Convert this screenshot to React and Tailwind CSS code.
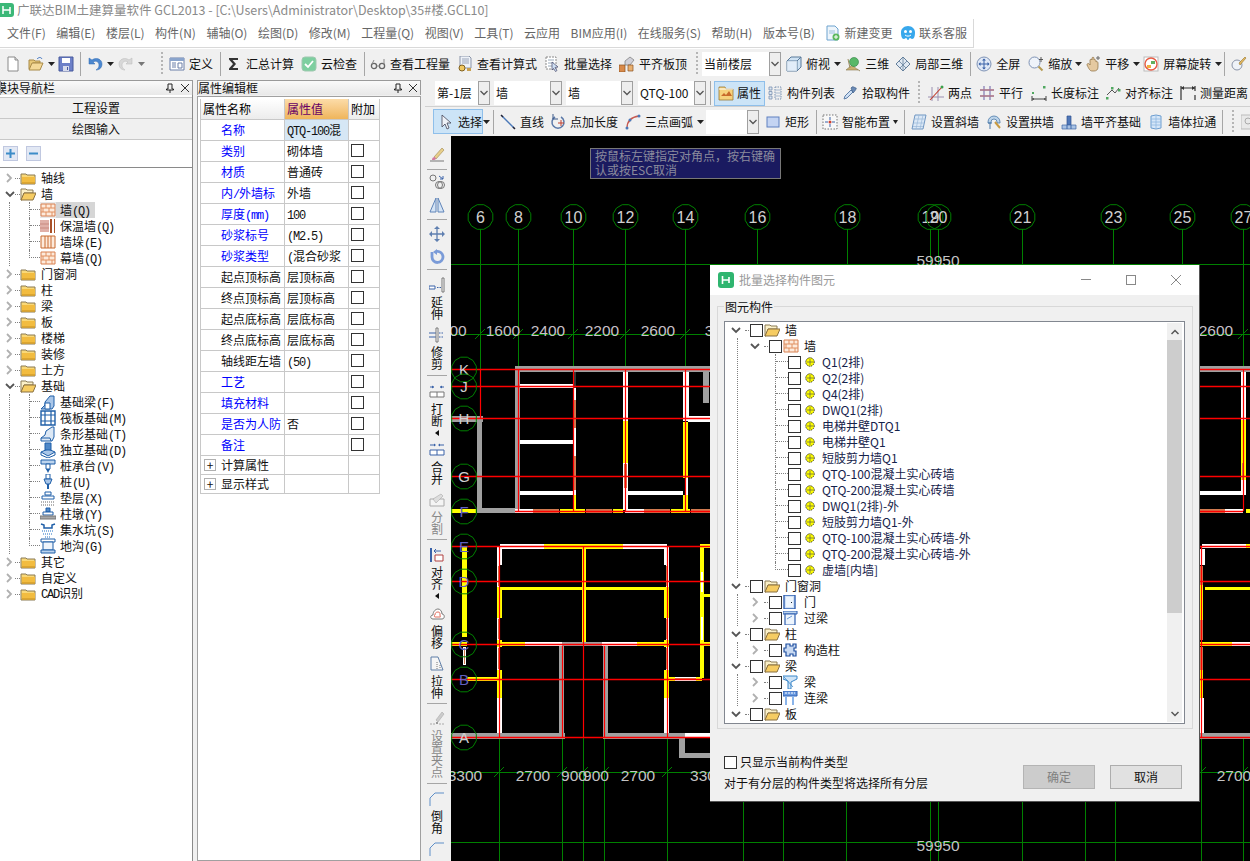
import React from "react";

const Ic = ({ w = 16, h = 16, children }) => (
  <svg width={w} height={h} viewBox={`0 0 ${w} ${h}`} className="shrink-0 block">{children}</svg>
);
const Arrow = ({ ml }) => (
  <span className={ml}><Ic w={7} h={4}><path d="M0 0h7L3.5 4z" fill="#222" /></Ic></span>
);
const GrayArrow = ({ ml }) => (
  <span className={ml}><Ic w={7} h={4}><path d="M0 0h7L3.5 4z" fill="#777" /></Ic></span>
);
const Sep = ({ ml }) => <span className={`w-px h-[24px] bg-[#a6a6a6] shrink-0 ${ml}`} />;
const Grip = ({ ml }) => (
  <span className={`shrink-0 ${ml}`}>
    <svg width="3" height="26" className="block"><path d="M1 1v24" stroke="#b5b5b5" strokeWidth="2" strokeDasharray="2 2" /></svg>
  </span>
);
const T = ({ ml, icon, label }) => (
  <span className={`flex items-center gap-[4px] shrink-0 ${ml}`}>
    {icon}
    {label ? <span className="text-[12px] leading-[16px] whitespace-nowrap text-[#111]">{label}</span> : null}
  </span>
);
const Chev = () => (
  <svg width="8" height="6" viewBox="0 0 8 6" className="block"><path d="M0.5 1 4 4.5 7.5 1" fill="none" stroke="#555" strokeWidth="1.3" /></svg>
);
const Combo = ({ w, text }) => (
  <span className={`flex h-[24px] bg-white shrink-0 ${w}`}>
    <span className="flex-1 min-w-0 overflow-hidden pl-[2px] text-[12px] leading-[24px] whitespace-nowrap text-[#111]">{text}</span>
    <span className="w-[12px] shrink-0 border border-[#a0a0a0] bg-[#eeeeee] flex items-center justify-center"><Chev /></span>
  </span>
);

/* toolbar icons */
const Doc = () => <Ic><path d="M3 1h7l3 3v11H3z" fill="#fff" stroke="#8a8a8a" /><path d="M10 1v3h3" fill="#ddd" stroke="#8a8a8a" /></Ic>;
const OpenF = () => <Ic><path d="M1 4h5l1 1h5v2H5L3 13H1z" fill="#e8c878" stroke="#a88a48" /><path d="M4 7h11l-3 7H1z" fill="#f4d998" stroke="#a88a48" /><path d="M9 3c2-2 4-2 5 0" fill="none" stroke="#3a70c0" /></Ic>;
const Save = () => <Ic><path d="M1 1h14v14H1z" fill="#6d80c8" stroke="#46589c" /><path d="M4 2h8v5H4z" fill="#fff" /><path d="M5 10h6v5H5z" fill="#d8dcec" /><path d="M9 11h1v3H9z" fill="#46589c" /></Ic>;
const Undo = () => <Ic><path d="M2 2v6h6L6 6c3-2 6 0 6 3 0 2-1 4-3 5 4 0 6-3 6-6 0-5-6-7-10-4z" fill="#4c88d0" stroke="#2f68b0" strokeWidth=".5" /></Ic>;
const Redo = () => <Ic><path d="M14 2v6H8l2-2c-3-2-6 0-6 3 0 2 1 4 3 5-4 0-6-3-6-6 0-5 6-7 10-4z" fill="#d8d8d8" stroke="#b8b8b8" strokeWidth=".5" /></Ic>;
const Define = () => <Ic><path d="M1 2h14v12H1z" fill="#fff" stroke="#6a7fa8" /><path d="M1 2h14v3H1z" fill="#8aa4cc" /><path d="M3 7h4M3 9h4M3 11h4M9 7h4v5H9z" fill="none" stroke="#6a7fa8" /></Ic>;
const Sigma = () => <Ic><path d="M3 2h9v2H6.5L10 8l-3.5 4H12v2H3v-1.5L7 8 3 3.5z" fill="#333" /></Ic>;
const CheckI = () => <Ic><rect x="1" y="1" width="14" height="14" rx="3" fill="#7ecfa0" stroke="#a0c8b0" /><path d="M4 8l3 3 5-6" fill="none" stroke="#fff" strokeWidth="1.8" /></Ic>;
const Glass = () => <Ic><circle cx="4" cy="10" r="2.6" fill="none" stroke="#666" strokeWidth="1.3" /><circle cx="12" cy="10" r="2.6" fill="none" stroke="#666" strokeWidth="1.3" /><path d="M6.6 10h2.8M2 8l2-4M14 8V3" stroke="#888" fill="none" /></Ic>;
const DocFind = () => <Ic><path d="M3 0h9l2 2v10H3z" fill="#eef2f8" stroke="#8a94a8" /><path d="M5 3h7M5 5h7M5 7h7" stroke="#9aa4b8" /><circle cx="5" cy="12" r="3" fill="#f0c860" stroke="#806020" /><path d="M10 12h4v3h-4z" fill="#c8a050" /></Ic>;
const Batch = () => <Ic><path d="M2 1h10v12H2z" fill="#fff" stroke="#8a8a8a" strokeDasharray="2 1" /><path d="M4 4h6M4 7h6M4 10h4" stroke="#9ab" /><path d="M8 6l6 5-3 .5 2 3-1.5 1-2-3L8 14z" fill="#cfe0f4" stroke="#446" strokeWidth=".7" /></Ic>;
const Plate = () => <Ic><path d="M0 9h6v7H0z" fill="#d98a4a" stroke="#8a5020" strokeWidth=".7" /><path d="M6 5l5-4 4 3-4 5H6z" fill="#d0d0d8" stroke="#777" strokeWidth=".7" /><path d="M9 9h5v6H9z" fill="#e8b070" stroke="#8a5020" strokeWidth=".7" /></Ic>;
const Box3 = () => <Ic><path d="M1 5l4-4h10v10l-4 4H1z" fill="#cfe2f3" stroke="#5a7a9a" /><path d="M1 5h10v10M11 5l4-4" fill="none" stroke="#5a7a9a" /><path d="M1 5h10v10H1z" fill="#e9f2fb" fillOpacity=".7" /></Ic>;
const ThreeD = () => <Ic><path d="M1 14l6-5 6 5z" fill="#c9b070" stroke="#8a7a50" strokeWidth=".6" /><circle cx="9" cy="6" r="4.5" fill="#58b868" stroke="#2d8040" strokeWidth=".6" /><path d="M3 3l2 9M12 13l3 2" stroke="#9a8a60" /></Ic>;
const Local3 = () => <Ic><path d="M1 8l7-7 7 7-7 7z" fill="#dfe8f2" stroke="#65809c" /><path d="M4 5l7 7M8 1l-0 14M12 5l-7 7" stroke="#65809c" strokeWidth=".8" /></Ic>;
const Full = () => <Ic><circle cx="8" cy="8" r="7" fill="#dfe8f6" stroke="#7f93b5" /><path d="M8 3v10M3 8h10" stroke="#3b62a8" /><path d="M8 2.5l-2 2h4zM8 13.5l-2-2h4zM2.5 8l2-2v4zM13.5 8l-2-2v4z" fill="#3b62a8" /></Ic>;
const ZoomI = () => <Ic><circle cx="6.5" cy="6.5" r="5.5" fill="#eef3fa" stroke="#7f93b5" /><path d="M10.5 10.5l4 4" stroke="#b59a50" strokeWidth="2" /><path d="M13 1v5M11 3.5h4" stroke="#555" /></Ic>;
const Pan = () => <Ic><path d="M2 9c0-2 2-2 3 0V4c0-1 2-1 2 0V2c0-1 2-1 2 0v2c1-1 2 0 2 1v1c1-1 2 0 2 1v4c0 3-2 4-4 4H7C5 15 4 13 2 9z" fill="#e5c9a0" stroke="#8a6d40" strokeWidth=".7" /><path d="M13 0v4M11 2h4" stroke="#666" /></Ic>;
const Rotate = () => <Ic><rect x="1" y="1" width="14" height="14" fill="#fff" stroke="#bbb" /><circle cx="8" cy="8" r="6" fill="none" stroke="#e65c45" strokeWidth="1.4" /><path d="M4 9h4v3H4z" fill="#f0b040" /><path d="M8 5h4v3H8z" fill="#60b060" /></Ic>;
const Wand = () => <Ic><circle cx="6" cy="9" r="5" fill="#eef2f8" stroke="#8a94a8" /><path d="M8 7l6-6 1 1-6 7z" fill="#e4b860" stroke="#96752a" strokeWidth=".6" /></Ic>;
const PropsI = () => <Ic><path d="M1 2h6l1 2h7v11H1z" fill="#f6d27c" stroke="#9a7a38" strokeWidth=".8" /><path d="M3 11l3-3 2 2 3-4 3 5H3z" fill="#c86a2a" /><path d="M1 4h14" stroke="#fff" /></Ic>;
const ListI = () => <Ic><path d="M2 2h3v3H2zM2 6.500h3v3H2zM2 11h3v3H2z" fill="#dde8f4" stroke="#7890b0" strokeWidth=".8" /><path d="M8 2h6v12H8z" fill="none" stroke="#7890b0" strokeDasharray="1.500 1" /><path d="M8 5h6M8 8h6M8 11h6" stroke="#a5b8cf" /></Ic>;
const Dropper = () => <Ic><path d="M2 14l1-3 6-6 2 2-6 6z" fill="#cfe0f4" stroke="#5f7fa8" /><path d="M9 3l1-1c1-1 3 1 4 1s-1 3-2 4l-1 1z" fill="#6a8ab5" stroke="#3f5f88" strokeWidth=".7" /></Ic>;
const TwoP = () => <Ic><path d="M0 12h16M4 2v14M10 2v14" stroke="#9a8fb0" /><path d="M2 15L14 2" stroke="#c03a2a" strokeWidth="1.100" /><circle cx="14" cy="2" r="1.500" fill="#3aa04a" /></Ic>;
const Para = () => <Ic><path d="M1 5h14M1 11h14M5 1v14M11 1v14" stroke="#8a82b8" strokeWidth="1.300" /><path d="M1 5h14M1 11h14" stroke="#d07060" strokeWidth=".8" /></Ic>;
const LenD = () => <Ic><path d="M1 14h14M1 11v5M15 11v5" stroke="#444" /><path d="M1 14l2-1v2zM15 14l-2-1v2z" fill="#444" /><rect x="1" y="7" width="2" height="2" fill="#50a860" /><rect x="12" y="1" width="2.500" height="2.500" fill="#50a860" /></Ic>;
const AlignD = () => <Ic><path d="M2 10l5-5 3 3 4-5" fill="none" stroke="#555" /><rect x="1" y="12" width="2.500" height="2.500" fill="#50a860" /><rect x="6" y="2" width="2.500" height="2.500" fill="#50a860" /><rect x="13" y="4" width="2.500" height="2.500" fill="#50a860" /></Ic>;
const Meas = () => <Ic><path d="M1 3h14M1 1v14M15 1v5M15 10v5" stroke="#333" strokeWidth="1.200" /><path d="M1 3l3-2v4zM15 3l-3-2v4z" fill="#333" /></Ic>;
const Cursor = () => <Ic><path d="M5 1v12l3-3 2 5 2-1-2-5h4z" fill="#eef2f8" stroke="#445" strokeWidth=".8" /></Ic>;
const Line = () => <Ic><path d="M2 2l12 12" stroke="#4a78b8" strokeWidth="1.500" /><path d="M1 1l2 2M13 13l2 2" stroke="#223" strokeWidth="1.500" /></Ic>;
const PtLen = () => <Ic><path d="M5 3a6 6 0 1 0 6 0" fill="none" stroke="#5a78a8" strokeWidth="1.500" /><path d="M3 0v5h5" fill="none" stroke="#3a5888" /><path d="M11 6v6M8 9h6" stroke="#c04030" /></Ic>;
const Arc = () => <Ic><path d="M2 14C2 7 7 3 14 2" fill="none" stroke="#c85a50" strokeWidth="1.300" /><circle cx="2" cy="14" r="1.500" fill="#4a78b8" /><circle cx="14" cy="2" r="1.500" fill="#4a78b8" /><circle cx="5" cy="6" r="1.500" fill="#4a78b8" /></Ic>;
const RectI = () => <Ic><rect x="2" y="3" width="12" height="10" fill="#c4d4f2" stroke="#5f80c0" /></Ic>;
const Smart = () => <Ic><path d="M1 1h14v14H1z" fill="#f8f8f8" stroke="#777" strokeDasharray="1.500 1.500" /><path d="M8 3v3M8 10v3M3 8h3M10 8h3" stroke="#3a62a8" /><circle cx="8" cy="8" r="1.500" fill="#d04030" /></Ic>;
const Slant = () => <Ic><path d="M4 1h11l-3 14H1z" fill="#dbe8f6" stroke="#6f96c2" /><path d="M3.500 5h10M2.800 9h10M2 12.500h10M8 1l-3 14M12 1l-3 14" stroke="#9ab8d8" strokeWidth=".7" /></Ic>;
const ArchI = () => <Ic><path d="M2 8a6 6 0 0 1 12 0v1h-3V8a3 3 0 0 0-6 0v1H2z" fill="#bcd4ea" stroke="#4a78a8" strokeWidth=".8" /><path d="M4 9v6M2 9h4" stroke="#4a78a8" /><path d="M9 8l5 6" stroke="#c89a40" strokeWidth="2" /></Ic>;
const WallB = () => <Ic><path d="M6 2h4v9H6z" fill="#5078b8" stroke="#2f508f" strokeWidth=".7" /><path d="M1 11h14v4H1z" fill="#a8c2e4" stroke="#3f68a8" strokeWidth=".7" /><path d="M6 11v4M10 11v4" stroke="#3f68a8" /></Ic>;
const WallT = () => <Ic><path d="M3 2l5-1 5 1v12l-5 1-5-1z" fill="#d5e6f8" stroke="#6d9ed0" /><path d="M8 1v14M3 5h10M3 8h10M3 11h10" stroke="#8fb8e0" strokeWidth=".8" /></Ic>;
const Mag = () => <Ic><rect x="0" y="1" width="15" height="14" fill="#e8e8e8" stroke="#bbb" /><circle cx="7" cy="7" r="3" fill="none" stroke="#aaa" /></Ic>;
const NewChg = () => <Ic><path d="M2 1h8l3 3v11H2z" fill="#eef5fb" stroke="#6da3cf" /><path d="M4 6h6M4 8h6" stroke="#9cc0dd" /><circle cx="11" cy="12" r="3.500" fill="#5cb85c" /><path d="M11 10v4M9 12h4" stroke="#fff" /></Ic>;
const Kefu = () => <Ic><path d="M8 1c4 0 7 3 7 6 0 2 0 7-3 7-1 0-1-1-2-1s-1 2-2 2-1-2-2-2-1 1-2 1C1 14 1 9 1 7c0-3 3-6 7-6z" fill="#38a8ec" /><circle cx="5.500" cy="6.500" r="1.500" fill="#fff" /><circle cx="10.500" cy="6.500" r="1.500" fill="#fff" /><path d="M5 10c2 1.500 4 1.500 6 0" fill="none" stroke="#fff" /></Ic>;
const AppI = () => <Ic w={14} h={16}><rect x="-2" y="1" width="16" height="14" rx="3" fill="#3cb878" /><path d="M3 4v8M3 8h7M10 5v7" stroke="#fff" strokeWidth="1.500" fill="none" /></Ic>;

/* vertical bar icons */
const VBrush = () => <Ic><path d="M1 14h14" stroke="#777" /><path d="M5 10l8-9 2 2-8 9z" fill="#e8cf8a" stroke="#9c8550" strokeWidth=".6" /><path d="M3 13c0-2 1-3 3-3l1 2c-1 1-2 1-4 1z" fill="#d27aa0" /></Ic>;
const VCircles = () => <Ic><circle cx="4" cy="4" r="3" fill="none" stroke="#777" /><circle cx="10" cy="11" r="3.500" fill="none" stroke="#777" /><circle cx="12" cy="11" r="3.500" fill="none" stroke="#777" /><path d="M10 2l4 3M14 2v3h-3" stroke="#3b62a8" fill="none" /></Ic>;
const VMirror = () => <Ic><path d="M7 1v14H1zM9 1v14h6z" fill="#d5e4f5" stroke="#5f84b8" /></Ic>;
const VMove = () => <Ic><path d="M8 1v14M1 8h14" stroke="#5f7fb0" strokeWidth="1.300" /><path d="M8 0l-3 3h6zM8 16l-3-3h6zM0 8l3-3v6zM16 8l-3-3v6z" fill="#5f7fb0" /></Ic>;
const VRot = () => <Ic><path d="M3 3v5a5.500 5.500 0 1 0 5-5.500" fill="none" stroke="#7a9bd8" strokeWidth="2.800" /><path d="M8 0v6L4 3z" fill="#7a9bd8" /></Ic>;
const VExt = () => <Ic><path d="M0 9h6v3H0z" fill="#fff" stroke="#3a62a8" /><path d="M8 10.500h4" stroke="#3a62a8" strokeDasharray="1.500 1" /><path d="M13 1h2v14h-2z" fill="#fff" stroke="#777" /></Ic>;
const VTrim = () => <Ic><path d="M0 6h8M0 10h8" stroke="#3a62a8" /><path d="M7 1h2v14H7z" fill="#fff" stroke="#777" /><path d="M10 6h5M10 10h5" stroke="#3a62a8" strokeDasharray="1.500 1" /></Ic>;
const VBreak = () => <Ic><path d="M1 3h4M15 3h-4" stroke="#3a62a8" /><path d="M5 3L3 1.500v3zM11 3l2-1.500v3z" fill="#3a62a8" /><path d="M1 8h14v5H1z" fill="#fff" stroke="#777" /><path d="M8 8v5" stroke="#777" /></Ic>;
const VMerge = () => <Ic><path d="M1 3h5M15 3h-5" stroke="#3a62a8" /><path d="M7 3L5 1.500v3zM9 3l2-1.500v3z" fill="#3a62a8" /><path d="M1 8h14v5H1z" fill="#fff" stroke="#3a62a8" /><path d="M8 8v5" stroke="#3a62a8" /></Ic>;
const VSplit = () => <Ic><path d="M1 14V7h14v7z" fill="#f4f4f4" stroke="#aaa" /><path d="M4 7l8-5 2 2-7 7z" fill="#ddd" stroke="#aaa" strokeWidth=".6" /></Ic>;
const VAlign = () => <Ic><path d="M2 1v14" stroke="#3a62a8" strokeWidth="2" /><path d="M6 8h8v6H6z" fill="#fff" stroke="#b04040" /><path d="M12 4H5M7 2L5 4l2 2" fill="none" stroke="#3a62a8" /></Ic>;
const VOff = () => <Ic><path d="M4 13c-3 0-3-4 0-4 0-4 3-6 5-6s4 2 4 5c3 0 3 5 0 5z" fill="#fff" stroke="#777" /><path d="M6 11c-1 0-1-2 0-2 0-2 1-3 3-3s2 1 2 3 1 2 0 2z" fill="none" stroke="#e06a5a" /></Ic>;
const VStretch = () => <Ic><path d="M2 1h7l5 13H2z" fill="#f5f5f5" stroke="#5f7fa8" /><path d="M8 6v7M11 9v4" stroke="#777" strokeDasharray="1 1" /></Ic>;
const VGrip = () => <Ic><path d="M7 9l6-8 2 2-6 8z" fill="#ccc" stroke="#aaa" strokeWidth=".6" /><path d="M1 13h5M10 13h5" stroke="#aaa" strokeDasharray="2 1" /><rect x="7" y="11" width="2" height="2" fill="#999" /></Ic>;
const VCham = () => <Ic><path d="M1 15V7l5-5h9" fill="none" stroke="#5f8fc8" /></Ic>;

const vItems = [
  { c: "h-[29px] pt-[7px]", i: <VBrush /> },
  { sep: 1 },
  { c: "h-[24px] pt-[4px]", i: <VCircles /> },
  { c: "h-[25px] pt-[3px]", i: <VMirror /> },
  { sep: 1 },
  { c: "h-[26px] pt-[6px]", i: <VMove /> },
  { c: "h-[23px] pt-[3px]", i: <VRot /> },
  { sep: 1 },
  { c: "h-[53px] pt-[7px]", i: <VExt />, t: "延伸" },
  { c: "h-[52px] pt-[4px]", i: <VTrim />, t: "修剪" },
  { sep: 1 },
  { c: "h-[61px] pt-[8px]", i: <VBreak />, t: "打断", a: 1 },
  { c: "h-[51px] pt-[5px]", i: <VMerge />, t: "合并" },
  { c: "h-[51px] pt-[4px]", i: <VSplit />, t: "分割", g: 1 },
  { sep: 1 },
  { c: "h-[60px] pt-[7px]", i: <VAlign />, t: "对齐", a: 1 },
  { c: "h-[52px] pt-[6px]", i: <VOff />, t: "偏移" },
  { c: "h-[51px] pt-[4px]", i: <VStretch />, t: "拉伸" },
  { sep: 1 },
  { c: "h-[79px] pt-[7px]", i: <VGrip />, t: "设置夹点", g: 1 },
  { sep: 1 },
  { c: "h-[54px] pt-[7px]", i: <VCham />, t: "倒角" },
  { c: "h-[22px] pt-[3px]", i: <VCham /> },
];

const VBar = () => (
  <div className="w-[26px] shrink-0 bg-[#f0f0f0] flex flex-col overflow-hidden pr-[2px]">
    <div className="h-[4px] shrink-0" />
    {vItems.map((v, k) =>
      v.sep ? (
        <div key={k} className="h-px shrink-0 mx-[2px] bg-[#a6a6a6]" />
      ) : (
        <div key={k} className={`shrink-0 flex flex-col items-center ${v.c}`}>
          {v.i}
          {v.t ? (
            <div className={`mt-[3px] flex flex-col items-center text-[12px] leading-[12px] ${v.g ? "text-[#888]" : "text-[#111]"}`}>
              {v.t.split("").map((ch, n) => <span key={n}>{ch}</span>)}
            </div>
          ) : null}
          {v.a ? <svg width="4" height="6" className="mt-[3px] block"><path d="M4 0v6L0 3z" fill="#111" /></svg> : null}
        </div>
      )
    )}
  </div>
);

/* mixed latin/cjk text in the narrow bitmap look */
const Mono = ({ text }) => (
  <>
    {text.split(/([\x21-\x7e]+)/).map((p, k) =>
      /^[\x21-\x7e]+$/.test(p) ? (
        <span key={k} className="[font-family:'Liberation_Mono',monospace] tracking-[-1.2px]">{p}</span>
      ) : (
        <span key={k}>{p}</span>
      )
    )}
  </>
);

/* folder & tree icons */
const Folder = () => <Ic h={14}><path d="M1 3h5l1 1h8v9H1z" fill="#f9d878" stroke="#8a7a55" /><path d="M2 6h13v6.500H2z" fill="#f2bc40" /><path d="M2 12h13" stroke="#c89020" /></Ic>;
const FolderOpen = () => <Ic h={14}><path d="M1 2h5l1 1h6v3H4l-2 7H1z" fill="#fbf0c8" stroke="#8a7a55" /><path d="M4 6h12l-3 7H1z" fill="#f6cc62" stroke="#8a7040" /></Ic>;
const ChevR = () => <svg width="7" height="10" viewBox="0 0 7 10" className="block shrink-0"><path d="M1 1l4 4-4 4" fill="none" stroke="#b0b0b0" strokeWidth="1.800" /></svg>;
const ChevD = () => <svg width="10" height="7" viewBox="0 0 10 7" className="block shrink-0"><path d="M1 1l4 4 4-4" fill="none" stroke="#555" strokeWidth="1.800" /></svg>;

const Brick = () => <Ic h={14}><path d="M1 1h14v12H1z" fill="#fdeadb" stroke="#d88050" /><path d="M1 5h14M1 9h14M6 1v4M11 1v4M3 5v4M9 5v4M6 9v4M12 9v4" stroke="#e09060" /></Ic>;
const Insul = () => <Ic h={14}><path d="M0 1h9v12H0z" fill="#e0b0a8" /><path d="M0 5h9M0 9h9" stroke="#c88a80" /><path d="M10 0h2v14h-2zM14 0h1v14h-1z" fill="#a85028" /></Ic>;
const Butt = () => <Ic h={14}><path d="M1 1h14v12H1z" fill="#fdeadb" stroke="#c86a30" /><path d="M5 1v12M11 1v12M8 1v12" stroke="#c86a30" /></Ic>;
const B = "#1f5fa8";
const F1 = () => <Ic><path d="M1 15l4-4V8l5-6h4v10l-2 3z" fill="#a9c6e8" stroke={B} /><path d="M5 9h5v6H5z" fill="#fff" stroke={B} /></Ic>;
const F2 = () => <Ic><path d="M1 1h14v14H1z" fill="#fff" stroke={B} strokeWidth="1.400" /><path d="M5 1v14M11 1v14M1 5h14M1 11h14" stroke={B} strokeWidth="1.200" /></Ic>;
const F3 = () => <Ic><path d="M1 15v-3l4-3 1-4 6-4h2v10l-2 4z" fill="#dce8f5" stroke={B} /><path d="M1 12h9l1 3" fill="none" stroke={B} /></Ic>;
const F4 = () => <Ic><path d="M1 10l7-3 7 3-7 4z" fill="#a9c6e8" stroke={B} /><path d="M1 10v3l7 3 7-3v-3" fill="none" stroke={B} /><path d="M5 1h6v7H5z" fill="#4f88c8" stroke={B} /></Ic>;
const F5 = () => <Ic><path d="M1 2h14v4H1z" fill="#bcd4ee" stroke={B} /><path d="M6 6h4v5H6z" fill="#fff" stroke={B} /><path d="M6 11h4l-2 4z" fill={B} /></Ic>;
const F6 = () => <Ic><path d="M6 0h4v5H6z" fill="#fff" stroke={B} /><path d="M4 5h8l-2 5H6z" fill="#a9c6e8" stroke={B} /><path d="M8 10v5" stroke={B} strokeWidth="2" /></Ic>;
const F7 = () => <Ic><path d="M5 2h6v3H5zM2 6h12v3H2z" fill="#fff" stroke={B} /><path d="M1 12h14M1 15h14" stroke="#666" strokeDasharray="1 1" /></Ic>;
const F8 = () => <Ic><path d="M6 2h4v4H6z" fill="#4f88c8" stroke={B} /><path d="M3 6h10v3H3z" fill="#fff" stroke={B} /><path d="M0 10h16v3H0z" fill="#a8a8a8" stroke="#777" /></Ic>;
const F9 = () => <Ic><path d="M1 2l3 1v3h8V3l3-1" fill="none" stroke={B} strokeWidth="1.500" /><path d="M2 9h12M3 12h10M5 15h6" stroke="#6aa0d8" strokeDasharray="1 1" strokeWidth="1.500" /></Ic>;
const F10 = () => <Ic><path d="M1 1h14v3H1z" fill="#fff" stroke={B} /><path d="M3 4h10v8H3z" fill="#eef4fb" stroke={B} /><path d="M1 12h14v3H1z" fill="#bcd4ee" stroke={B} /></Ic>;

const Gear = () => (
  <Ic w={10} h={10}>
    <circle cx="5" cy="5" r="4.200" fill="#ffff00" stroke="#222" strokeWidth="1" strokeDasharray="1.300 .9" />
    <path d="M5 2v6M2 5h6" stroke="#555" strokeWidth=".7" />
  </Ic>
);
const DoorI = () => <Ic h={14}><path d="M1 0h11v14H1z" fill="#cfe0f5" stroke="#2f5fb0" strokeWidth="1.400" /><path d="M3 2h7v10H3z" fill="#eef5fd" /><rect x="8" y="7" width="1" height="1" fill="#123" /></Ic>;
const LintelI = () => <Ic h={14}><path d="M0 0h14v3H0z" fill="#bcd4ee" stroke="#2f5fb0" /><path d="M2 3h10v11H2z" fill="#eef5fd" stroke="#2f5fb0" strokeWidth="1.200" /><path d="M4 8l5-3" stroke="#6a9ad8" /></Ic>;
const ColI = () => <Ic h={14}><path d="M3 1h4v2h3V1h3v4h-2v3h2v5h-3v-2H7v2H3V9H1V5h2z" fill="#c9daf2" stroke="#1f4fa0" strokeWidth="1.200" /></Ic>;
const BeamI = () => <Ic h={14}><path d="M0 1h14v3l-6 3v7H5V6L0 4z" fill="#cfe4f7" stroke="#3a86c8" /><path d="M1 2l9 10" stroke="#3a86c8" strokeWidth=".8" /></Ic>;
const LinkI = () => <Ic h={14}><path d="M0 0h14v5H0z" fill="#6a9ae0" stroke="#2f5fb0" /><path d="M3 5v9M10 5v9" stroke="#8ab4ea" strokeWidth="2" /><path d="M2 2h10" stroke="#fff" strokeDasharray="2 1" /></Ic>;

/* navigation tree */
const navTree = [
  { t: "轴线" },
  { t: "墙", o: 1, k: [
    { t: "墙(Q)", i: <Brick />, sel: 1 }, { t: "保温墙(Q)", i: <Insul /> }, { t: "墙垛(E)", i: <Butt /> }, { t: "幕墙(Q)", i: <Brick /> },
  ] },
  { t: "门窗洞" }, { t: "柱" }, { t: "梁" }, { t: "板" }, { t: "楼梯" }, { t: "装修" }, { t: "土方" },
  { t: "基础", o: 1, k: [
    { t: "基础梁(F)", i: <F1 /> }, { t: "筏板基础(M)", i: <F2 /> }, { t: "条形基础(T)", i: <F3 /> }, { t: "独立基础(D)", i: <F4 /> },
    { t: "桩承台(V)", i: <F5 /> }, { t: "桩(U)", i: <F6 /> }, { t: "垫层(X)", i: <F7 /> }, { t: "柱墩(Y)", i: <F8 /> },
    { t: "集水坑(S)", i: <F9 /> }, { t: "地沟(G)", i: <F10 /> },
  ] },
  { t: "其它" }, { t: "自定义" }, { t: "CAD识别" },
];

const Elbow = ({ last, w }) => (
  <div className={`h-4 shrink-0 ${w} ${last ? "" : "border-l border-dotted border-[#808080]"}`}>
    <div className={`h-[8px] border-b border-dotted border-[#808080] ${last ? "border-l" : ""}`} />
  </div>
);

const NavTree = () => (
  <div className="pt-[2px] text-[12px] leading-[16px] text-[#111]">
    {navTree.map((n, k) => (
      <div key={k}>
        <div className="h-4 flex items-center">
          <span className="w-[4px] shrink-0" />
          <span className="w-[11px] shrink-0 flex justify-center">{n.o ? <ChevD /> : <ChevR />}</span>
          <span className="w-[5px] shrink-0 border-t border-dotted border-[#808080]" />
          {n.o ? <FolderOpen /> : <Folder />}
          <span className="ml-[5px] whitespace-nowrap"><Mono text={n.t} /></span>
        </div>
        {n.k ? (
          <div className="ml-[9px] border-l border-dotted border-[#808080]">
            <div className="pl-[19px]">
              {n.k.map((c, m) => (
                <div key={m} className="h-4 flex items-center">
                  <Elbow last={m === n.k.length - 1} w="w-[11px]" />
                  <span className={c.sel ? "bg-[#e8e8e8] h-4 flex items-center" : "h-4 flex items-center"}>{c.i}</span>
                  <span className={`pl-[4px] pr-[5px] h-4 whitespace-nowrap ${c.sel ? "bg-[#d6d6d6]" : ""}`}><Mono text={c.t} /></span>
                </div>
              ))}
            </div>
          </div>
        ) : null}
      </div>
    ))}
  </div>
);

const PanelTitle = ({ title, cls }) => (
  <div className="mt-px h-[15px] flex items-center border-t border-x border-[#9a9a9a] bg-gradient-to-b from-[#fafafa] to-[#e8e8e8] overflow-hidden">
    <span className={`flex-1 whitespace-nowrap text-[12px] leading-[14px] text-[#111] ${cls}`}>{title}</span>
    <span className="mr-[7px]">
      <svg width="8" height="10" className="block"><path d="M2 1h4v5h1.500v1h-7V6H2zM4 7v3" fill="none" stroke="#222" /></svg>
    </span>
    <span className="mr-[3px]">
      <svg width="8" height="8" className="block"><path d="M0 0l8 8M8 0L0 8" stroke="#333" /></svg>
    </span>
  </div>
);

/* property table */
const props = [
  ["名称", "QTQ-100混", 1, 0], ["类别", "砌体墙", 1, 1], ["材质", "普通砖", 1, 1], ["内/外墙标", "外墙", 1, 1],
  ["厚度(mm)", "100", 1, 1], ["砂浆标号", "(M2.5)", 1, 1], ["砂浆类型", "(混合砂浆", 1, 1], ["起点顶标高", "层顶标高", 0, 1],
  ["终点顶标高", "层顶标高", 0, 1], ["起点底标高", "层底标高", 0, 1], ["终点底标高", "层底标高", 0, 1], ["轴线距左墙", "(50)", 0, 1],
  ["工艺", "", 1, 1], ["填充材料", "", 1, 1], ["是否为人防", "否", 1, 1], ["备注", "", 1, 1],
];
const Box13 = () => <span className="block w-[13px] h-[13px] shrink-0 bg-white border border-[#333]" />;

const PropTable = () => (
  <div className="ml-[2px] mt-[2px] w-[180px] text-[12px] leading-[16px] border-l border-[#c8c8c8]">
    <div className="grid grid-cols-[84px_64px_31px] h-[21px] border-b border-[#c8c8c8]">
      <div className="pl-[2px] pt-[2px] bg-gradient-to-b from-white to-[#ececec] border-r border-[#c8c8c8]">属性名称</div>
      <div className="pl-[2px] pt-[2px] text-[#660066] bg-gradient-to-b from-[#fcdca8] to-[#efb55a] border-r border-[#c8c8c8]">属性值</div>
      <div className="pl-[2px] pt-[2px] bg-gradient-to-b from-white to-[#ececec] border-r border-[#c8c8c8]">附加</div>
    </div>
    {props.map((r, k) => (
      <div key={k} className="grid grid-cols-[84px_64px_31px] h-[21px] border-b border-[#c8c8c8]">
        <div className={`pl-[20px] pt-[2px] whitespace-nowrap border-r border-[#c8c8c8] ${r[2] ? "text-[#0000ff]" : "text-[#111]"}`}><Mono text={r[0]} /></div>
        <div className={`pl-[2px] pt-[2px] whitespace-nowrap overflow-hidden border-r border-[#c8c8c8] text-[#111] ${r[3] ? "" : "bg-[#d6e7f5]"}`}><Mono text={r[1]} /></div>
        <div className="pl-[2px] pt-[3px] border-r border-[#c8c8c8]">{r[3] ? <Box13 /> : null}</div>
      </div>
    ))}
    {["计算属性", "显示样式"].map((t) => (
      <div key={t} className="grid grid-cols-[84px_64px_31px] h-[19px] border-b border-[#c8c8c8]">
        <div className="flex items-center border-r border-[#c8c8c8] text-[#111]">
          <span className="ml-[3px] w-[12px] h-[12px] border border-[#b0b0b0] flex items-center justify-center text-[12px] leading-[10px]">+</span>
          <span className="ml-[5px]">{t}</span>
        </div>
        <div className="border-r border-[#c8c8c8]" />
        <div className="border-r border-[#c8c8c8]" />
      </div>
    ))}
  </div>
);

/* CAD canvas */
const G = "#a0a0a0", W = "#ffffff", Y = "#ffff00", O = "#cf7a50", D = "#333333";
const walls = [
  [515,366,710,372,G],[515,372,520,512,G],[703,372,709,403,G],[451,416,483,422,G],[477,422,482,510,G],[477,508,518,513,G],
  [520,384,573,388,W],[520,440,573,444,W],[520,491,573,495,W],[573,372,576,388,D],[573,388,576,495,W],[574,400,576,428,O],[574,456,576,490,O],[573,495,576,510,Y],
  [623,372,628,421,W],[623,421,628,463,Y],[623,463,628,510,W],[624,464,627,488,O],[683,372,689,421,W],[688,416,710,422,W],[683,422,688,478,Y],[685,478,688,495,W],[628,491,683,495,W],[683,495,688,511,Y],
  [451,509,476,513,Y],[515,509,533,513,W],[533,509,559,513,O],[560,509,585,513,Y],[586,509,612,513,O],[613,509,623,513,Y],[625,509,644,513,W],[644,509,670,513,O],[671,509,690,513,Y],[691,509,710,513,O],
  [500,544,544,549,W],[544,544,623,549,Y],[623,544,667,549,W],[582,549,586,644,Y],
  [497,547,502,565,W],[497,565,500,587,W],[498,566,500,586,O],[497,587,502,618,Y],[497,618,500,640,W],[498,619,500,639,O],[497,640,502,647,Y],[497,647,500,670,W],[498,648,500,669,O],[497,670,502,698,Y],[497,698,502,735,W],
  [664,547,669,565,W],[666,565,669,587,W],[666,566,668,586,O],[664,587,669,618,Y],[666,618,669,640,W],[666,619,668,639,O],[664,640,669,647,Y],[666,647,669,670,W],[666,648,668,669,O],[664,670,669,698,Y],[664,698,669,735,W],
  [501,587,665,590,Y],[501,642,525,646,Y],[525,642,562,646,W],[562,642,602,646,G],[602,642,637,646,W],[637,642,665,646,Y],
  [559,646,564,739,G],[603,646,608,739,G],[451,733,565,739,G],[604,733,685,739,G],[685,733,710,737,W],[679,739,685,758,G],[679,753,710,758,G],
  [462,546,467,637,Y],[451,642,467,646,Y],[463,647,466,665,W],[464,648,465,664,O],[467,677,497,681,Y],
  [700,544,704,678,Y],[701,572,703,592,W],[701,617,703,640,W],[703,544,710,548,Y],[704,594,710,597,Y],[700,642,710,646,Y],[669,677,675,681,Y],[675,677,696,681,W],[675,678,696,680,O],[696,677,702,681,Y],
  [1199,366,1250,372,G],[1241,372,1246,420,W],[1241,420,1246,480,Y],[1242,463,1244,490,O],[1241,480,1246,495,W],[1199,491,1241,495,W],[1199,509,1225,513,O],[1225,509,1243,513,W],[1246,509,1250,513,Y],
  [1202,544,1246,548,W],[1246,544,1250,548,Y],[1199,549,1205,565,W],[1200,566,1203,585,O],[1199,585,1203,620,Y],[1205,587,1250,590,Y],[1200,620,1203,640,O],[1199,642,1232,646,Y],[1232,642,1250,646,W],[1200,647,1203,670,O],[1199,670,1203,698,Y],[1199,698,1204,735,W],[1199,733,1250,739,G],
];
const redH = [[369,451,1250],[386,451,1250],[418,451,1250],[476,451,1250],[511,515,1243],[546,451,1250],[581,451,1250],[644,451,1250],[679,451,1250],[737,451,1250]];
const redV = [[480,369,418],[518,369,511],[573,369,511],[625,369,511],[685,369,511],[1243,369,511],[499,546,737],[583,546,737],[667,546,737],[1201,546,737],[562,646,737],[604,646,737]];
const topAxes = [[480,"6"],[518,"8"],[573,"10"],[625,"12"],[685,"14"],[757,"16"],[847,"18"],[930,"19"],[938,"20"],[1022,"21"],[1113,"23"],[1182,"25"],[1243,"27"]];
const sideAxes = [[369,"K"],[386,"J"],[418,"H"],[476,"G"],[511,"F"],[546,"E"],[581,"D"],[644,"C"],[679,"B"],[737,"A"]];
const bottomV = [499,562,583,604,667,743,783,846,930,938,1022,1085,1115,1201,1243];
const gon = (cx, cy, r) => {
  const p = [];
  for (let i = 0; i < 12; i++) {
    const a = (Math.PI / 6) * i + Math.PI / 12;
    p.push(`${(cx + r * Math.cos(a)).toFixed(1)},${(cy + r * Math.sin(a)).toFixed(1)}`);
  }
  return p.join(" ");
};
const dimsTop = [[458,"00"],[503,"1600"],[548,"2400"],[602,"2200"],[658,"2600"],[709,"3"],[1216,"2600"]];
const dimsBottom = [[465,"3300"],[533,"2700"],[574,"900"],[596,"900"],[638,"2700"],[703,"330"],[1234,"2700"]];

const Canvas = () => (
  <div className="flex-1 min-w-0 bg-black overflow-hidden">
    <svg width="799" height="725" viewBox="451 136 799 725" className="block [font-family:'Liberation_Sans',sans-serif]">
      {[264, 334, 772, 842].map((y) => <path key={y} d={`M451 ${y + 0.5}H1250`} stroke="#008000" />)}
      {topAxes.map(([x]) => <path key={x} d={`M${x + 0.5} 229V369`} stroke="#008000" />)}
      {bottomV.map((x) => <path key={x} d={`M${x + 0.5} 737V861`} stroke="#008000" />)}
      {topAxes.map(([x]) => <path key={x} d={`M${x - 5} 339l10 -10`} stroke="#008000" />)}
      {bottomV.map((x) => <path key={x} d={`M${x - 5} 777l10 -10`} stroke="#008000" />)}
      {walls.map(([a, b, c, d, f], k) => <rect key={k} x={a} y={b} width={c - a} height={d - b} fill={f} />)}
      {redH.map(([y, a, b]) => <path key={y} d={`M${a} ${y + 0.5}H${b}`} stroke="#ff0000" strokeWidth="1.300" />)}
      {redV.map(([x, a, b]) => <path key={x} d={`M${x + 0.5} ${a}V${b}`} stroke="#ff0000" strokeWidth="1.200" />)}
      {topAxes.map(([x, t]) => (
        <g key={x}>
          <polygon points={gon(x + 0.5, 217, 12.7)} fill="none" stroke="#008000" />
          <text x={x + 0.5} y="223" textAnchor="middle" fontSize="16" fill="#d0d0d0">{t}</text>
        </g>
      ))}
      {sideAxes.map(([y, t]) => (
        <g key={y}>
          <polygon points={gon(464, y + 0.5, 12.7)} fill="none" stroke="#008000" />
          <text x="464" y={y + 6} textAnchor="middle" fontSize="15" fill={y > 500 && y < 700 ? "#6060c0" : "#d0d0d0"}>{t}</text>
        </g>
      ))}
      {dimsTop.map(([x, t]) => <text key={x} x={x} y="336" textAnchor="middle" fontSize="15.500" fill="#c8c0c8">{t}</text>)}
      {dimsBottom.map(([x, t]) => <text key={x} x={x} y="781" textAnchor="middle" fontSize="15.500" fill="#c4c4c4">{t}</text>)}
      <text x="938" y="266" textAnchor="middle" fontSize="15.500" fill="#c4c4c4">59950</text>
      <text x="938" y="851" textAnchor="middle" fontSize="15.500" fill="#c4c4c4">59950</text>
      <rect x="590.500" y="148.500" width="190" height="30" fill="#1a1a60" stroke="#777" />
    </svg>
  </div>
);

/* dialog tree */
const dlgL3 = ["Q1(2排)", "Q2(2排)", "Q4(2排)", "DWQ1(2排)", "电梯井壁DTQ1", "电梯井壁Q1", "短肢剪力墙Q1", "QTQ-100混凝土实心砖墙", "QTQ-200混凝土实心砖墙", "DWQ1(2排)-外", "短肢剪力墙Q1-外", "QTQ-100混凝土实心砖墙-外", "QTQ-200混凝土实心砖墙-外", "虚墙[内墙]"];

const L1 = ({ t }) => (
  <div className="h-4 flex items-center">
    <span className="ml-[6px] w-[10px] shrink-0"><ChevD /></span>
    <span className="ml-[4px] w-[4px] shrink-0 border-t border-dotted border-[#808080]" />
    <span className="ml-px"><Box13 /></span>
    <span className="ml-px"><FolderOpen /></span>
    <span className="ml-[5px] text-[12px] leading-[16px] text-[#111] whitespace-nowrap">{t}</span>
  </div>
);
const L2 = ({ t, i, open }) => (
  <div className="h-4 flex items-center">
    <span className="ml-[12px] w-[10px] shrink-0 flex justify-center">{open ? <ChevD /> : <ChevR />}</span>
    <span className="ml-[4px] w-[4px] shrink-0 border-t border-dotted border-[#808080]" />
    <span className="ml-px"><Box13 /></span>
    <span className="ml-px">{i}</span>
    <span className="ml-[5px] text-[12px] leading-[16px] text-[#111] whitespace-nowrap">{t}</span>
  </div>
);
const Sub = ({ children }) => <div className="ml-[12px] border-l border-dotted border-[#808080]">{children}</div>;

const DlgTree = () => (
  <div className="flex-1 min-w-0 h-[400px] overflow-hidden">
    <L1 t="墙" />
    <Sub>
      <L2 t="墙" i={<Brick />} open />
      <div className="ml-[37px]">
        {dlgL3.map((t, k) => (
          <div key={k} className="h-4 flex items-center">
            <Elbow last={k === dlgL3.length - 1} w="w-[13px]" />
            <Box13 />
            <span className="ml-[4px]"><Gear /></span>
            <span className="ml-[7px] text-[12px] leading-[16px] text-[#15224a] whitespace-nowrap">{t}</span>
          </div>
        ))}
      </div>
    </Sub>
    <L1 t="门窗洞" />
    <Sub>
      <L2 t="门" i={<DoorI />} />
      <L2 t="过梁" i={<LintelI />} />
    </Sub>
    <L1 t="柱" />
    <Sub>
      <L2 t="构造柱" i={<ColI />} />
    </Sub>
    <L1 t="梁" />
    <Sub>
      <L2 t="梁" i={<BeamI />} />
      <L2 t="连梁" i={<LinkI />} />
    </Sub>
    <L1 t="板" />
  </div>
);

const Dialog = () => (
  <div className="absolute left-[710px] top-[265px] w-[490px] h-[537px] bg-[#f0f0f0] border-r border-b border-[#555] flex flex-col">
    <div className="h-[30px] shrink-0 bg-white flex items-center">
      <span className="ml-[8px]">
        <svg width="16" height="16" className="block"><rect width="16" height="16" rx="3" fill="#2fb56f" /><path d="M4.500 4v8M4.500 8H11M11 5v6" stroke="#fff" strokeWidth="1.600" fill="none" /></svg>
      </span>
      <span className="ml-[5px] text-[12px] text-[#9a9a9a]">批量选择构件图元</span>
      <span className="ml-auto mr-[18px] flex items-center gap-[35px]">
        <svg width="10" height="2" className="block"><path d="M0 .5h10" stroke="#888" /></svg>
        <svg width="10" height="10" className="block"><rect x=".5" y=".5" width="9" height="9" fill="none" stroke="#888" /></svg>
        <svg width="10" height="10" className="block"><path d="M0 0l10 10M10 0L0 10" stroke="#888" /></svg>
      </span>
    </div>
    <div className="ml-[7px] mt-[11px] w-[476px] h-[423px] shrink-0 border border-[#d8d8d8] px-[6px] pt-[13px]">
      <div className="-mt-[21px] mb-[6px] h-[16px] w-fit bg-[#f0f0f0] px-px text-[12px] leading-[16px] text-[#111]">图元构件</div>
      <div className="w-[461px] h-[403px] bg-white border border-[#828790] flex">
        <DlgTree />
        <div className="w-[15px] mx-[2px] my-px shrink-0 bg-[#f0f0f0] flex flex-col">
          <div className="h-[17px] flex items-center justify-center">
            <svg width="8" height="6" className="block"><path d="M.5 5L4 1.500 7.500 5" fill="none" stroke="#555" strokeWidth="1.500" /></svg>
          </div>
          <div className="h-[273px] bg-[#cdcdcd]" />
          <div className="flex-1" />
          <div className="h-[17px] flex items-center justify-center">
            <svg width="8" height="6" className="block"><path d="M.5 1L4 4.500 7.500 1" fill="none" stroke="#555" strokeWidth="1.500" /></svg>
          </div>
        </div>
      </div>
    </div>
    <div className="ml-[14px] mt-[25px] flex items-center h-[16px]">
      <Box13 />
      <span className="ml-[3px] text-[12px] leading-[16px] text-[#111]">只显示当前构件类型</span>
    </div>
    <div className="ml-[14px] mr-[17px] mt-[1px] flex items-start">
      <span className="mt-[4px] text-[12px] leading-[16px] text-[#111]">对于有分层的构件类型将选择所有分层</span>
      <span className="ml-auto -mt-[6px] w-[72px] h-[24px] bg-[#cccccc] border border-[#b4b4b4] text-[12px] leading-[22px] text-center text-[#808080]">确定</span>
      <span className="ml-[15px] -mt-[6px] w-[72px] h-[24px] bg-[#e1e1e1] border border-[#adadad] text-[12px] leading-[22px] text-center text-[#111]">取消</span>
    </div>
  </div>
);

const menus = ["文件(F)", "编辑(E)", "楼层(L)", "构件(N)", "辅轴(O)", "绘图(D)", "修改(M)", "工程量(Q)", "视图(V)", "工具(T)", "云应用", "BIM应用(I)", "在线服务(S)", "帮助(H)", "版本号(B)"];

export default function App() {
  return (
    <div className="relative w-[1250px] h-[861px] overflow-hidden bg-[#f0f0f0] [font-family:'Noto_Sans_CJK_SC','Noto_Sans',sans-serif] flex flex-col">
      {/* title */}
      <div className="h-[19px] shrink-0 bg-white flex items-center">
        <AppI />
        <span className="ml-[3px] text-[12.5px] leading-[16px] text-[#8a8a8a] whitespace-nowrap">广联达BIM土建算量软件 GCL2013 - [C:\Users\Administrator\Desktop\35#楼.GCL10]</span>
      </div>
      {/* menu */}
      <div className="h-[30px] shrink-0 bg-white flex">
        <div className="w-[974px] h-[29px] border-r border-b border-[#d9d9d9] flex items-center pl-[7px] gap-[10.5px]">
          {menus.map((m) => <span key={m} className="text-[12px] leading-[16px] text-[#666] whitespace-nowrap">{m}</span>)}
          <span className="flex items-center gap-[3px]"><NewChg /><span className="text-[12px] text-[#666] whitespace-nowrap">新建变更</span></span>
          <span className="-ml-[3px] flex items-center gap-[3px]"><Kefu /><span className="text-[12px] text-[#666] whitespace-nowrap">联系客服</span></span>
        </div>
      </div>
      {/* toolbar 1 */}
      <div className="h-[30px] shrink-0 flex items-center overflow-hidden">
        <T ml="ml-[5px]" icon={<Doc />} />
        <T ml="ml-[7px]" icon={<OpenF />} />
        <Arrow ml="ml-[4px]" />
        <T ml="ml-[3px]" icon={<Save />} />
        <Sep ml="ml-[6px]" />
        <T ml="ml-[6px]" icon={<Undo />} />
        <Arrow ml="ml-[4px]" />
        <T ml="ml-[4px]" icon={<Redo />} />
        <GrayArrow ml="ml-[4px]" />
        <Grip ml="ml-[16px]" />
        <T ml="ml-[5px]" icon={<Define />} label="定义" />
        <Sep ml="ml-[7px]" />
        <T ml="ml-[5px]" icon={<Sigma />} label="汇总计算" />
        <T ml="ml-[7px]" icon={<CheckI />} label="云检查" />
        <Sep ml="ml-[7px]" />
        <T ml="ml-[5px]" icon={<Glass />} label="查看工程量" />
        <T ml="ml-[7px]" icon={<DocFind />} label="查看计算式" />
        <T ml="ml-[7px]" icon={<Batch />} label="批量选择" />
        <T ml="ml-[7px]" icon={<Plate />} label="平齐板顶" />
        <Grip ml="ml-[9px]" />
        <span className="ml-[3px]"><Combo w="w-[79px]" text="当前楼层" /></span>
        <T ml="ml-[5px]" icon={<Box3 />} label="俯视" />
        <Arrow ml="ml-[4px]" />
        <T ml="ml-[4px]" icon={<ThreeD />} label="三维" />
        <T ml="ml-[6px]" icon={<Local3 />} label="局部三维" />
        <Sep ml="ml-[7px]" />
        <T ml="ml-[5px]" icon={<Full />} label="全屏" />
        <T ml="ml-[8px]" icon={<ZoomI />} label="缩放" />
        <Arrow ml="ml-[3px]" />
        <T ml="ml-[3px]" icon={<Pan />} label="平移" />
        <Arrow ml="ml-[4px]" />
        <T ml="ml-[3px]" icon={<Rotate />} label="屏幕旋转" />
        <Arrow ml="ml-[4px]" />
        <Sep ml="ml-[2px]" />
        <T ml="ml-[6px]" icon={<Wand />} />
      </div>
      {/* work area */}
      <div className="flex-1 min-h-0 flex">
        <div className="w-[193px] shrink-0 flex flex-col">
          <PanelTitle title="模块导航栏" cls="-ml-[6px]" />
          <div className="flex-1 min-h-0 flex flex-col border-r border-[#8a8a8a] bg-white">
            <div className="mt-[2px] h-[22px] bg-[#f0f0f0] border-y border-[#c8c8c8] text-center text-[12px] leading-[20px] text-[#111]">工程设置</div>
            <div className="h-[21px] bg-[#f0f0f0] border-b border-[#c8c8c8] text-center text-[12px] leading-[20px] text-[#111]">绘图输入</div>
            <div className="h-[27px] flex items-center pl-[3px] gap-[8px]">
              <span className="w-[15px] h-[15px] bg-[#e2e8f4] border border-[#c0c8e0] flex items-center justify-center">
                <svg width="11" height="11" className="block"><path d="M5.500 1v9M1 5.500h9" stroke="#3c8cc8" strokeWidth="2" /></svg>
              </span>
              <span className="w-[15px] h-[15px] bg-[#e2e8f4] border border-[#c0c8e0] flex items-center justify-center">
                <svg width="11" height="11" className="block"><path d="M1 5.500h9" stroke="#3c8cc8" strokeWidth="2" /></svg>
              </span>
            </div>
            <div className="flex-1 min-h-0 border-t border-[#8a8a8a] overflow-hidden">
              <NavTree />
            </div>
          </div>
        </div>
        <div className="ml-[4px] w-[224px] shrink-0 flex flex-col">
          <PanelTitle title="属性编辑框" cls="" />
          <div className="flex-1 min-h-0 mt-px bg-white border border-[#a0a0a0]">
            <PropTable />
          </div>
        </div>
        <div className="ml-[4px] flex-1 min-w-0 flex flex-col">
          {/* toolbar 2 */}
          <div className="mt-px h-[27px] shrink-0 flex items-center border-b border-[#d0d0d0] overflow-hidden">
            <span className="ml-[10px]"><Combo w="w-[55px]" text="第-1层" /></span>
            <span className="ml-[4px]"><Combo w="w-[68px]" text="墙" /></span>
            <span className="ml-[4px]"><Combo w="w-[67px]" text="墙" /></span>
            <span className="ml-[5px]"><Combo w="w-[68px]" text="QTQ-100" /></span>
            <Sep ml="ml-[4px]" />
            <span className="ml-[3px] w-[51px] h-[25px] shrink-0 bg-[#cce4f7] border border-[#8fbfea] flex items-center gap-[3px] pl-[3px]">
              <PropsI /><span className="text-[12px] text-[#111]">属性</span>
            </span>
            <T ml="ml-[2px]" icon={<ListI />} label="构件列表" />
            <T ml="ml-[7px]" icon={<Dropper />} label="拾取构件" />
            <Grip ml="ml-[8px]" />
            <T ml="ml-[7px]" icon={<TwoP />} label="两点" />
            <T ml="ml-[7px]" icon={<Para />} label="平行" />
            <T ml="ml-[8px]" icon={<LenD />} label="长度标注" />
            <T ml="ml-[6px]" icon={<AlignD />} label="对齐标注" />
            <T ml="ml-[7px]" icon={<Meas />} label="测量距离" />
          </div>
          {/* toolbar 3 */}
          <div className="h-[29px] shrink-0 flex items-center overflow-hidden">
            <span className="ml-[8px] w-[50px] h-[25px] shrink-0 bg-[#cce4f7] border border-[#8fbfea] flex items-center gap-[2px] pl-[3px]">
              <Cursor /><span className="ml-[3px] text-[12px] text-[#111]">选择</span>
            </span>
            <Arrow ml="ml-0" />
            <Sep ml="ml-[3px]" />
            <T ml="ml-[6px]" icon={<Line />} label="直线" />
            <T ml="ml-[6px]" icon={<PtLen />} label="点加长度" />
            <T ml="ml-[7px]" icon={<Arc />} label="三点画弧" />
            <Arrow ml="ml-[4px]" />
            <span className="ml-[2px]"><Combo w="w-[53px]" text="" /></span>
            <T ml="ml-[6px]" icon={<RectI />} label="矩形" />
            <Sep ml="ml-[7px]" />
            <T ml="ml-[5px]" icon={<Smart />} label="智能布置" />
            <span className="ml-[3px]"><Ic w={5} h={4}><path d="M0 0h5L2.500 4z" fill="#222" /></Ic></span>
            <Sep ml="ml-[6px]" />
            <T ml="ml-[6px]" icon={<Slant />} label="设置斜墙" />
            <T ml="ml-[7px]" icon={<ArchI />} label="设置拱墙" />
            <T ml="ml-[7px]" icon={<WallB />} label="墙平齐基础" />
            <T ml="ml-[7px]" icon={<WallT />} label="墙体拉通" />
            <Sep ml="ml-[6px]" />
            <Grip ml="ml-[9px]" />
            <T ml="ml-[6px]" icon={<Mag />} />
          </div>
          <div className="flex-1 min-h-0 flex">
            <VBar />
            <Canvas />
          </div>
        </div>
      </div>
      {/* hint shown over the canvas */}
      <div className="absolute left-[595px] top-[148px] w-[185px] h-[30px] overflow-hidden text-[12px] leading-[14px] text-[#8a8a9c] pt-px">
        <div className="whitespace-nowrap">按鼠标左键指定对角点，按右键确</div>
        <div className="whitespace-nowrap">认或按ESC取消</div>
      </div>
      <Dialog />
    </div>
  );
}
